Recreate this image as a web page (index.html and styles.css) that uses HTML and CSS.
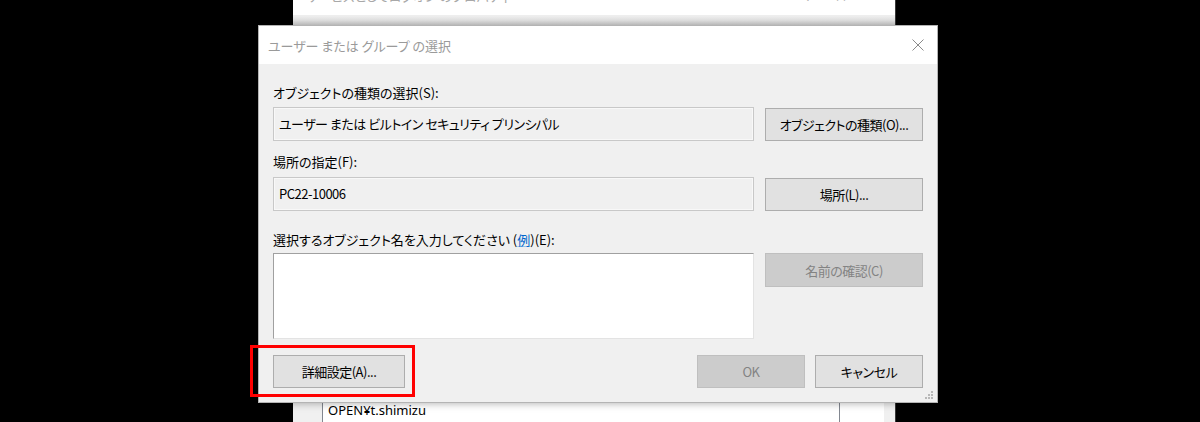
FILE: index.html
```html
<!DOCTYPE html>
<html lang="ja">
<head>
  <meta charset="UTF-8">
  <title>ユーザー または グループ の選択</title>
  <link rel="stylesheet" href="styles.css">
</head>
<body>
  <div class="desktop">
    <!-- window behind the dialog -->
    <div class="back-window">
      <div class="back-title">
        <span class="back-title-text">サービスとしてログオン のプロパティ</span>
        <span class="back-title-btns">?&nbsp;&nbsp;&nbsp;&nbsp;&nbsp;&nbsp;&nbsp;&nbsp;×</span>
      </div>
      <div class="back-strip"></div>
      <div class="back-spacer"></div>
      <div class="back-list">
        <div class="back-col">OPEN¥t.shimizu</div>
        <div class="back-col back-col-2"></div>
      </div>
    </div>

    <!-- select users or groups dialog -->
    <div class="dialog">
      <div class="titlebar">
        <span class="title">ユーザー または グループ の選択</span>
        <svg class="close" width="12" height="12" viewBox="0 0 12 12">
          <path d="M0.5 0.5 L11.5 11.5 M11.5 0.5 L0.5 11.5" stroke="#8a8a8a" stroke-width="1" fill="none"/>
        </svg>
      </div>

      <div class="content">
        <div class="label label-1">オブジェクトの種類の選択(S):</div>
        <div class="row row-1">
          <div class="field">ユーザー または ビルトイン セキュリティ プリンシパル</div>
          <button class="btn">オブジェクトの種類(O)...</button>
        </div>

        <div class="label label-2">場所の指定(F):</div>
        <div class="row row-2">
          <div class="field">PC22-10006</div>
          <button class="btn">場所(L)...</button>
        </div>

        <div class="label label-3">選択するオブジェクト名を入力してください (<span class="link">例</span>)(E):</div>
        <div class="row row-3">
          <div class="names"></div>
          <button class="btn disabled">名前の確認(C)</button>
        </div>

        <div class="footer">
          <div class="advanced-wrap">
            <button class="btn btn-advanced">詳細設定(A)...</button>
            <div class="highlight"></div>
          </div>
          <div class="footer-right">
            <button class="btn btn-small disabled">OK</button>
            <button class="btn btn-small">キャンセル</button>
          </div>
        </div>
      </div>

      <svg class="grip" width="8" height="8" viewBox="0 0 8 8">
        <rect x="6" y="0" width="2" height="2" fill="#b8b8b8"/>
        <rect x="3" y="3" width="2" height="2" fill="#b8b8b8"/>
        <rect x="6" y="3" width="2" height="2" fill="#b8b8b8"/>
        <rect x="0" y="6" width="2" height="2" fill="#b8b8b8"/>
        <rect x="3" y="6" width="2" height="2" fill="#b8b8b8"/>
        <rect x="6" y="6" width="2" height="2" fill="#b8b8b8"/>
      </svg>
    </div>
  </div>
</body>
</html>
```

FILE: styles.css
```css
/* Black desktop behind the windows */
body {
  margin: 0;
  background: #000000;
  font-family: "Noto Sans CJK JP", "Noto Sans", sans-serif;
  font-feature-settings: "palt";
  color: #000000;
}

.desktop {
  position: relative;
  width: 1200px;
  height: 422px;
  overflow: hidden;
}

/* Window that sits behind the dialog */
.back-window {
  position: absolute;
  left: 293px;
  top: 0;
  width: 602px;
  height: 422px;
  background: #f0f0f0;
  border-right: 1px solid #3a3a3a;
  display: flex;
  flex-direction: column;
}

.back-title {
  height: 15px;
  background: #ffffff;
  position: relative;
  overflow: hidden;
  color: #a8a8a8;
  font-size: 13px;
}

.back-title-text {
  position: absolute;
  left: 13px;
  top: -14px;
}

.back-title-btns {
  position: absolute;
  left: 512px;
  top: -14px;
}

.back-strip {
  height: 10px;
  background: linear-gradient(#f0f0f0, #dedede);
  border-bottom: 1px solid #a8a8a8;
}

.back-spacer {
  flex: 1;
}

.back-list {
  height: 19px;
  margin-left: 29px;
  margin-right: 11px;
  display: flex;
  background: #ffffff;
  border-left: 1px solid #828790;
}

.back-col {
  width: 517px;
  padding-left: 5px;
  box-sizing: border-box;
  border-right: 1px solid #828790;
  font-family: "Noto Sans", sans-serif;
  font-size: 13px;
  line-height: 14px;
}

.back-col-2 {
  flex: 1;
  border-right: none;
}

/* The dialog */
.dialog {
  position: absolute;
  left: 258px;
  top: 25px;
  width: 680px;
  height: 378px;
  box-sizing: border-box;
  background: #f0f0f0;
  border: 1px solid #b4b4b4;
  box-shadow: 0 0 8px rgba(0, 0, 0, 0.35);
}

.titlebar {
  height: 38px;
  background: #ffffff;
  display: flex;
  align-items: center;
  justify-content: space-between;
  padding: 0 13px 0 9px;
}

.title {
  font-size: 13px;
  color: #9a9a9a;
}

.close {
  display: block;
}

.content {
  padding: 0 14px;
  font-size: 13px;
}

.label {
  height: 20px;
  line-height: 20px;
}

.label-1 {
  margin-top: 19px;
}

.label-2 {
  margin-top: 11px;
}

.label-3 {
  margin-top: 19px;
}

.link {
  color: #0066cc;
  text-decoration: underline;
  text-decoration-color: #9cc3ea;
}

.row {
  display: grid;
  grid-template-columns: 481px 158px;
  column-gap: 11px;
  align-items: center;
}

.row-1 {
  margin-top: 4px;
}

.row-2 {
  margin-top: 5px;
}

.row-3 {
  margin-top: 3px;
  align-items: start;
}

.field {
  height: 34px;
  box-sizing: border-box;
  border: 1px solid #c8c8c8;
  box-shadow: inset 0 0 0 1px #f8f8f8;
  background: #f0f0f0;
  padding-left: 5px;
  line-height: 31px;
  white-space: nowrap;
  letter-spacing: -0.5px;
}

.names {
  height: 86px;
  box-sizing: border-box;
  background: #ffffff;
  border: 1px solid;
  border-color: #a0a0a0 #e3e3e3 #e3e3e3 #a0a0a0;
}

/* Buttons */
.btn {
  height: 33px;
  box-sizing: border-box;
  border: 1px solid #adadad;
  background: #e1e1e1;
  font-family: inherit;
  font-feature-settings: "palt";
  font-size: 13px;
  letter-spacing: -0.5px;
  color: #000000;
  padding: 0;
}

.btn.disabled {
  background: #cccccc;
  border-color: #bfbfbf;
  color: #838383;
}

.row-3 .btn {
  height: 34px;
}

.footer {
  margin-top: 16px;
  display: flex;
  justify-content: space-between;
}

.advanced-wrap {
  position: relative;
}

.btn-advanced {
  width: 132px;
}

/* Red annotation box */
.highlight {
  position: absolute;
  left: -23px;
  top: -10px;
  width: 165px;
  height: 52px;
  box-sizing: border-box;
  border: 3px solid #ff0000;
}

.footer-right {
  display: flex;
  gap: 10px;
}

.btn-small {
  width: 108px;
}

.grip {
  position: absolute;
  right: 4px;
  bottom: 3px;
}
```
